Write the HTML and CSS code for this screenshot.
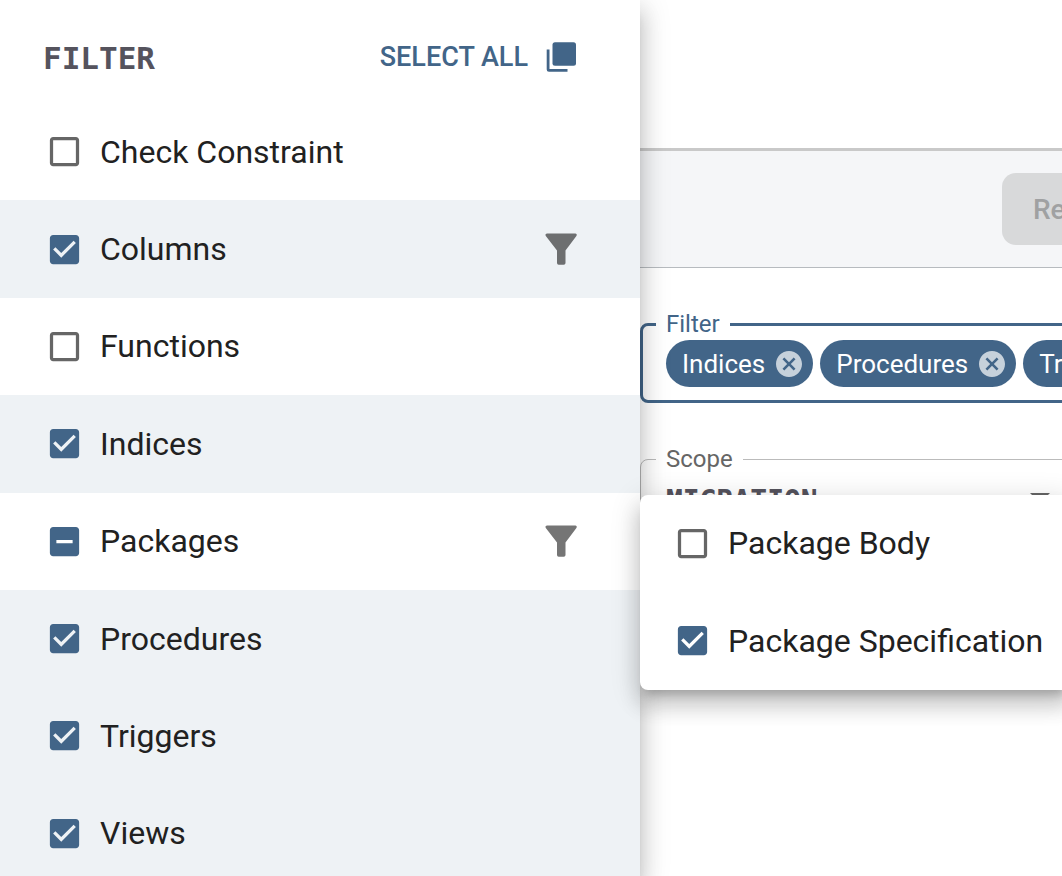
FILE: index.html
```html
<!DOCTYPE html>
<html lang="en">
<head>
<meta charset="utf-8">
<title>Filter</title>
<link rel="stylesheet" href="styles.css">
</head>
<body>
<svg class="symbols" aria-hidden="true">
  <symbol id="funnel" viewBox="0 0 32 32"><path d="M2 .5H30.500Q32.500 .8 31.400 3L20.500 17.500V30Q20.500 31.700 18.800 31.700H13.700Q12 31.700 12 30V17.500L.8 3Q-.3 .8 2 .5Z"/></symbol>
  <symbol id="cancel" viewBox="2 2 20 20"><path d="M12 2C6.470 2 2 6.470 2 12s4.470 10 10 10 10-4.470 10-10S17.530 2 12 2zm5 13.590L15.590 17 12 13.410 8.410 17 7 15.590 10.590 12 7 8.410 8.410 7 12 10.590 15.590 7 17 8.410 13.410 12 17 15.590z"/></symbol>
</svg>
<div class="app">
  <aside class="drawer">
    <header class="drawer-head">
      <h2 class="title">FILTER</h2>
      <button class="select-all" type="button">SELECT ALL
        <svg class="copy-icon" viewBox="0 0 30 30" aria-hidden="true"><rect x="6.500" y=".3" width="23.500" height="23.400" rx="2.500"/><path d="M.7 7.500H3.500V27H21.500V29.700H3Q.7 29.700 .7 27.500Z"/></svg>
      </button>
    </header>
    <ul class="list">
      <li class="row"><label class="option"><input class="check" type="checkbox">Check Constraint</label></li>
      <li class="row on"><label class="option"><input class="check" type="checkbox" checked>Columns</label>
        <button class="funnel" type="button" aria-label="Filter columns"><svg viewBox="0 0 32 32"><use href="#funnel"/></svg></button></li>
      <li class="row"><label class="option"><input class="check" type="checkbox">Functions</label></li>
      <li class="row on"><label class="option"><input class="check" type="checkbox" checked>Indices</label></li>
      <li class="row"><label class="option"><input class="check partial" type="checkbox">Packages</label>
        <button class="funnel" type="button" aria-label="Filter packages"><svg viewBox="0 0 32 32"><use href="#funnel"/></svg></button>
        <div class="popup">
          <label class="option"><input class="check" type="checkbox">Package Body</label>
          <label class="option"><input class="check" type="checkbox" checked>Package Specification</label>
        </div></li>
      <li class="row on"><label class="option"><input class="check" type="checkbox" checked>Procedures</label></li>
      <li class="row on"><label class="option"><input class="check" type="checkbox" checked>Triggers</label></li>
      <li class="row on"><label class="option"><input class="check" type="checkbox" checked>Views</label></li>
    </ul>
  </aside>
  <main class="content">
    <div class="banner"></div>
    <div class="toolbar"><button class="refresh" type="button" disabled>Refresh</button></div>
    <form class="fields">
      <fieldset class="field active">
        <legend>Filter</legend>
        <div class="chips">
          <span class="chip">Indices<button class="remove" type="button" aria-label="Remove Indices"><svg viewBox="0 0 20 20"><use href="#cancel"/></svg></button></span>
          <span class="chip">Procedures<button class="remove" type="button" aria-label="Remove Procedures"><svg viewBox="0 0 20 20"><use href="#cancel"/></svg></button></span>
          <span class="chip">Triggers<button class="remove" type="button" aria-label="Remove Triggers"><svg viewBox="0 0 20 20"><use href="#cancel"/></svg></button></span>
        </div>
      </fieldset>
      <fieldset class="field">
        <legend>Scope</legend>
        <div class="picker">
          <select class="scope" aria-label="Scope"><option>MIGRATION</option></select>
          <svg class="caret" viewBox="0 0 20 10" aria-hidden="true"><path d="M0 0H20L10 10Z"/></svg>
        </div>
      </fieldset>
    </form>
  </main>
</div>
</body>
</html>
```
FILE: styles.css
```css
:root {
  --blue: #426588;
  --elevation: 0 10px 10px -6px rgba(0, 0, 0, .2), 0 16px 20px 2px rgba(0, 0, 0, .14), 0 6px 28px 4px rgba(0, 0, 0, .12);
}
* { box-sizing: border-box; }
body {
  margin: 0;
  overflow: hidden;
  background: #fff;
  color: #212121;
  font-family: Roboto, "Liberation Sans", sans-serif;
}
button {
  border: 0;
  padding: 0;
  background: none;
  font: inherit;
  color: inherit;
}
svg { display: block; fill: currentColor; }
.symbols { display: none; }
.app { display: flex; height: 100vh; overflow: hidden; }

.drawer {
  position: relative;
  z-index: 1;
  flex: 0 0 640px;
  background: #fff;
  box-shadow: var(--elevation);
}
.drawer-head {
  display: flex;
  align-items: center;
  justify-content: space-between;
  height: 103px;
  padding: 12px 64px 0 43px;
}
.title {
  margin: 0;
  color: #55535d;
  font: bold 31px/36px "DejaVu Sans Mono", monospace;
}
.select-all {
  display: flex;
  align-items: center;
  gap: 18px;
  padding-bottom: 2px;
  color: var(--blue);
  font-size: 27px;
  font-weight: 500;
}
.copy-icon { width: 30px; height: 30px; }
.list {
  display: grid;
  grid-auto-rows: 1fr;
  height: 779px;
  margin: 0;
  padding: 0;
  list-style: none;
}
.row {
  position: relative;
  display: flex;
  align-items: center;
  justify-content: space-between;
  padding: 0 63px 0 45px;
}
.on { background: #eef2f5; }
.option {
  display: flex;
  align-items: center;
  gap: 16px;
  font-size: 32px;
  line-height: 40px;
  white-space: nowrap;
}
.check {
  appearance: none;
  width: 39px;
  height: 39px;
  margin: 0;
  background: #666;
  mask: url("data:image/svg+xml,%3Csvg xmlns='http://www.w3.org/2000/svg' viewBox='0 0 24 24'%3E%3Cpath d='M19 5v14H5V5h14m0-2H5c-1.1 0-2 .9-2 2v14c0 1.1.9 2 2 2h14c1.1 0 2-.9 2-2V5c0-1.1-.9-2-2-2z'/%3E%3C/svg%3E") center / 100%;
}
.check:checked {
  background: var(--blue);
  mask-image: url("data:image/svg+xml,%3Csvg xmlns='http://www.w3.org/2000/svg' viewBox='0 0 24 24'%3E%3Cpath d='M19 3H5c-1.11 0-2 .9-2 2v14c0 1.1.89 2 2 2h14c1.11 0 2-.9 2-2V5c0-1.1-.89-2-2-2zm-9 14l-5-5 1.41-1.41L10 14.17l7.59-7.59L19 8l-9 9z'/%3E%3C/svg%3E");
}
.check.partial {
  background: var(--blue);
  mask-image: url("data:image/svg+xml,%3Csvg xmlns='http://www.w3.org/2000/svg' viewBox='0 0 24 24'%3E%3Cpath d='M19 3H5c-1.1 0-2 .9-2 2v14c0 1.1.9 2 2 2h14c1.1 0 2-.9 2-2V5c0-1.1-.9-2-2-2zm-2 10H7v-2h10v2z'/%3E%3C/svg%3E");
}
.funnel { width: 32px; color: rgba(0, 0, 0, .54); }
.popup {
  position: absolute;
  z-index: 2;
  top: 2px;
  left: 100%;
  display: grid;
  grid-auto-rows: 1fr;
  height: 195px;
  padding: 0 27px 0 33px;
  border-radius: 8px;
  background: #fff;
  box-shadow: var(--elevation);
}

.content { flex: 1; min-width: 0; overflow: hidden; }
.banner { height: 151px; border-bottom: 3px solid #c9c9c9; }
.toolbar {
  display: flex;
  padding: 22px 0 22px 362px;
  border-bottom: 1px solid #b7bbbf;
  background: #f5f6f8;
}
.refresh {
  flex: none;
  height: 72px;
  padding: 0 31px;
  border-radius: 14px;
  background: #d8d9da;
  color: #a0a1a2;
  font-size: 28px;
  font-weight: 500;
}
.fields {
  display: grid;
  gap: 42px;
  width: 700px;
  padding-top: 42px;
}
.field {
  min-width: 0;
  height: 93px;
  margin: 0;
  padding: 0 15px;
  border: 1px solid #bbb;
  border-radius: 8px;
  color: #666;
}
.field.active {
  padding: 0 13px;
  border: 3px solid var(--blue);
  color: var(--blue);
}
.field legend {
  padding: 0 10px;
  font-size: 24px;
  line-height: 28px;
}
.chips { display: flex; gap: 7px; padding: 2px 10px; }
.chip {
  display: flex;
  flex: none;
  align-items: center;
  gap: 11px;
  height: 47px;
  padding: 0 11px 0 16px;
  border-radius: 24px;
  background: var(--blue);
  color: #fff;
  font-size: 26px;
}
.remove { width: 26px; color: rgba(255, 255, 255, .7); }
.picker { display: flex; align-items: flex-start; padding-left: 10px; }
.scope {
  appearance: none;
  width: 364px;
  border: 0;
  padding: 0;
  background: none;
  color: #55535d;
  font: bold 28px/56px "DejaVu Sans Mono", monospace;
}
.caret { width: 20px; height: 10px; margin-top: 20px; }
```
